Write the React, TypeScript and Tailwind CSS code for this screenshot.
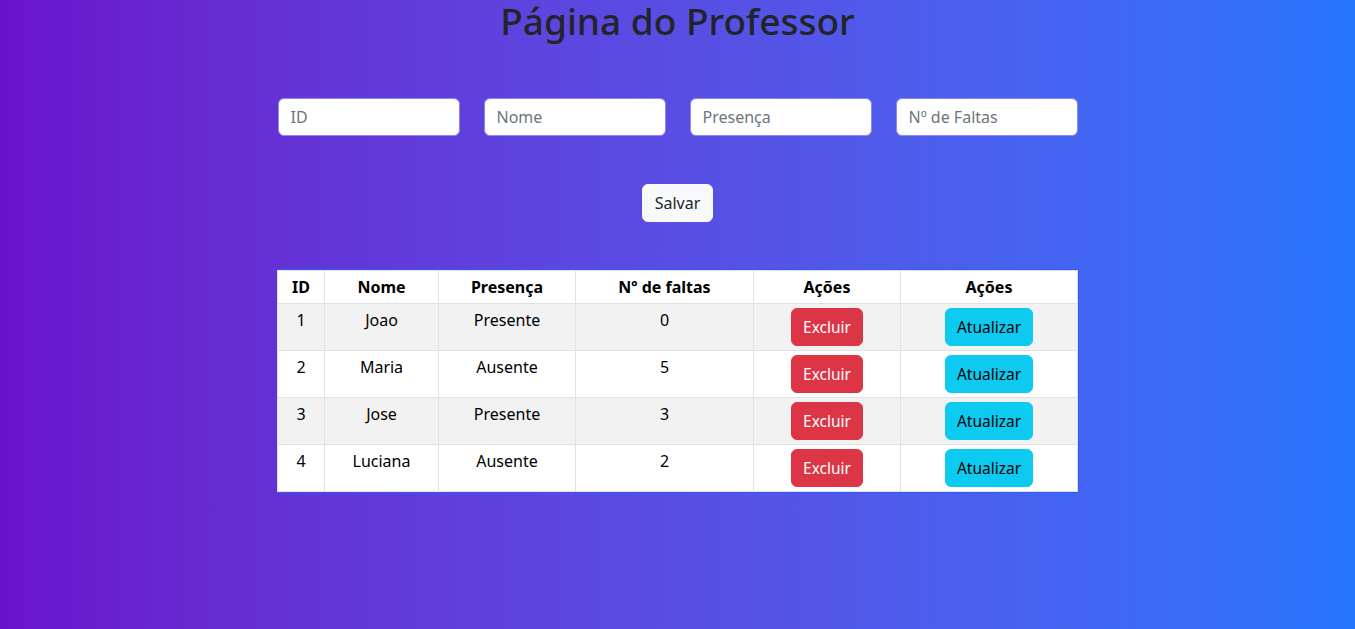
const alunos = [
  { id: 1, nome: 'Joao', presenca: 'Presente', faltas: 0 },
  { id: 2, nome: 'Maria', presenca: 'Ausente', faltas: 5 },
  { id: 3, nome: 'Jose', presenca: 'Presente', faltas: 3 },
  { id: 4, nome: 'Luciana', presenca: 'Ausente', faltas: 2 },
]

const campos = ['ID', 'Nome', 'Presença', 'Nº de Faltas']

function App() {
  return (
    <div className="min-h-screen bg-gradient-to-r from-[#6a11cb] to-[#2575fc] font-['Noto_Sans',sans-serif] text-[#212529]">
      <h1 className="text-center text-[37px] leading-[42px] font-medium">Página do Professor</h1>

      <div className="mx-auto mt-[56px] flex w-[800px] gap-6">
        {campos.map((c) => (
          <input
            key={c}
            placeholder={c}
            className="h-[38px] w-[182px] rounded-md border border-[#8b85f5] bg-white px-3 text-base placeholder:text-[#6c757d] outline-none"
          />
        ))}
      </div>

      <div className="mt-12 flex justify-center">
        <button className="h-[38px] rounded-md border border-[#f8f9fa] bg-[#f8f9fa] px-3 text-base text-[#212529]">
          Salvar
        </button>
      </div>

      <table className="mx-auto mt-12 w-[800px] table-fixed border-collapse bg-white text-center text-base text-black shadow-[1px_0_0_#2f5cf5,0_1px_0_#2f5cf5,0_-1px_0_#2f5cf5]">
        <colgroup>
          <col className="w-[47px]" />
          <col className="w-[114px]" />
          <col className="w-[137px]" />
          <col className="w-[178px]" />
          <col className="w-[147px]" />
          <col className="w-[177px]" />
        </colgroup>
        <thead>
          <tr>
            {['ID', 'Nome', 'Presença', 'Nº de faltas', 'Ações', 'Ações'].map((h, i) => (
              <th key={i} className="border border-[#dee2e6] px-1 py-1 font-bold leading-6">
                {h}
              </th>
            ))}
          </tr>
        </thead>
        <tbody>
          {alunos.map((a, i) => (
            <tr key={a.id} className={i % 2 === 0 ? 'bg-[#f2f2f2]' : 'bg-white'}>
              <td className="border border-[#dee2e6] p-1 align-top leading-6">{a.id}</td>
              <td className="border border-[#dee2e6] p-1 align-top leading-6">{a.nome}</td>
              <td className="border border-[#dee2e6] p-1 align-top leading-6">{a.presenca}</td>
              <td className="border border-[#dee2e6] p-1 align-top leading-6">{a.faltas}</td>
              <td className="border border-[#dee2e6] p-1 align-top">
                <button className="h-[38px] rounded-md border border-[#dc3545] bg-[#dc3545] px-[11px] text-[15.5px] leading-6 text-white">
                  Excluir
                </button>
              </td>
              <td className="border border-[#dee2e6] p-1 align-top">
                <button className="h-[38px] rounded-md border border-[#0dcaf0] bg-[#0dcaf0] px-[11px] text-[15.5px] leading-6 text-black">
                  Atualizar
                </button>
              </td>
            </tr>
          ))}
        </tbody>
      </table>
    </div>
  )
}

export default App
